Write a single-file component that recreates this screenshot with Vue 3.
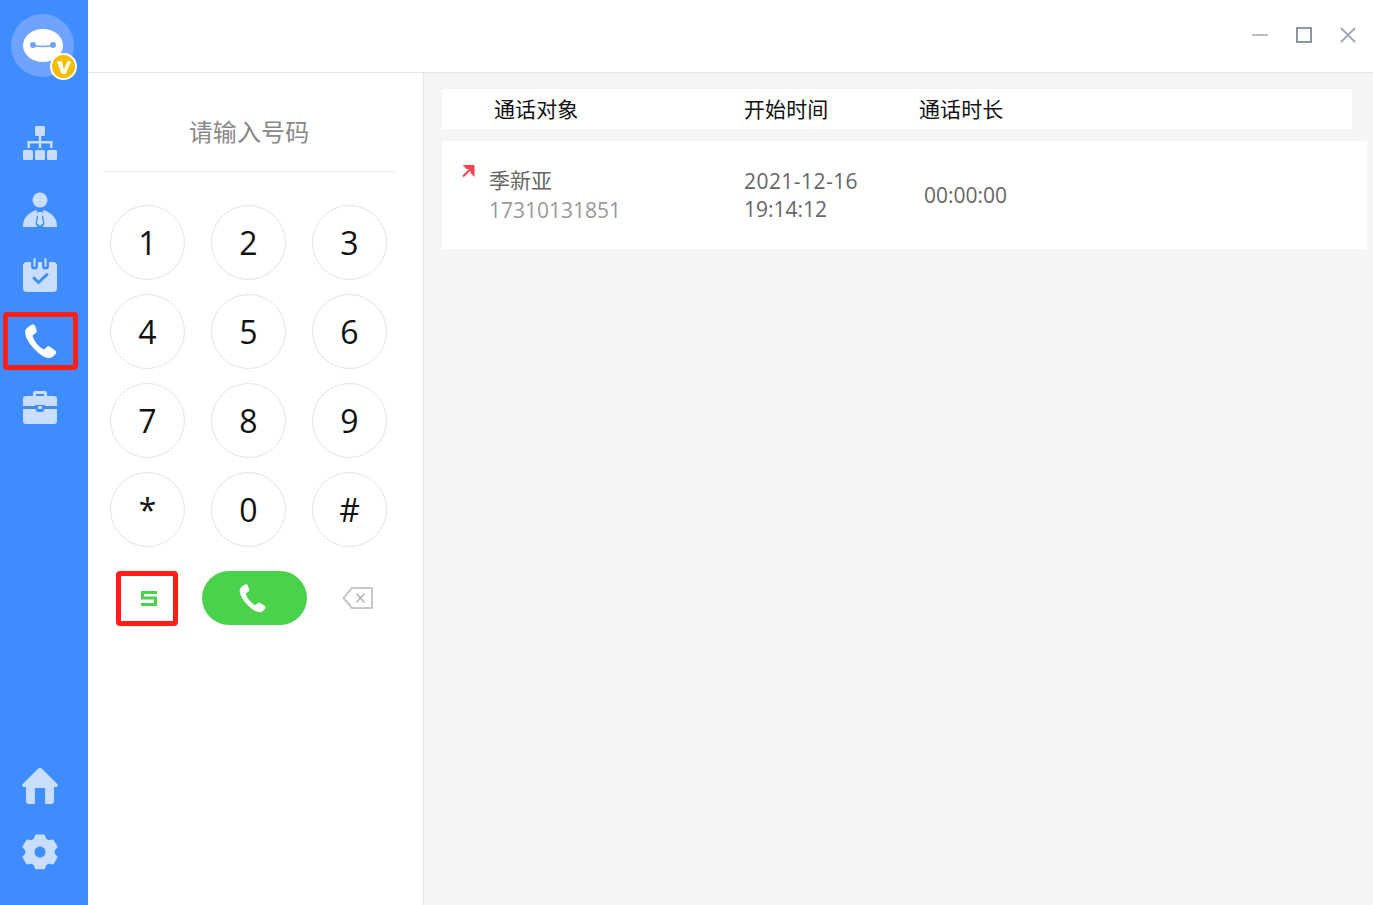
<script setup>
const keys = ['1', '2', '3', '4', '5', '6', '7', '8', '9', '*', '0', '#']
const phonePath = 'M6.6 1.2C5 1.9 2.6 3.4 2.2 5.2c-.5 2.6 1.2 6.6 4.6 10.6 3.6 4.2 7.6 7.2 11 7.6 2 .2 3.8-1.6 4.8-3 .5-.8.3-1.6-.4-2.1l-3.6-2.4c-.8-.5-1.5-.4-2.2.2l-1.3 1.2c-.4.3-.8.3-1.2.1-1.6-1-3-2.4-4.2-3.8-1.2-1.5-2-3-2.6-4.6-.1-.4 0-.8.4-1.1l1.5-1c.8-.6 1-1.3.7-2.2L8.7 2c-.4-.9-1.2-1.2-2.1-.8z'
</script>

<template>
  <div class="app">
    <aside class="side">
      <div class="logo">
        <svg width="40" height="33" viewBox="0 0 40 33">
          <ellipse cx="20" cy="16.500" rx="20" ry="16.500" fill="#fff" />
          <circle cx="10" cy="16" r="3" fill="#6ea4ff" />
          <circle cx="30" cy="16" r="3" fill="#6ea4ff" />
          <path d="M10 16.500q10 2 20 0" fill="none" stroke="#6ea4ff" stroke-width="1.400" />
        </svg>
        <span class="vip">
          <svg width="23" height="23" viewBox="0 0 24 24">
            <path d="M5 6.500h5.400l2 9 3.600-9h4L14 20h-3.600z" fill="#fff" />
          </svg>
        </span>
      </div>

      <nav class="nav">
        <div class="nav-item">
          <svg width="34" height="34" viewBox="0 0 34 34" fill="#c9deff">
            <rect x="12" y="0" width="10" height="10" rx="1.500" />
            <path d="M15.800 10h2.400v5H29.500v7h-2.400v-4.600H18.200V22h-2.400v-4.600H6.900V22H4.500v-7h11.300z" />
            <rect x="0" y="24" width="10" height="10" rx="1.500" />
            <rect x="12" y="24" width="10" height="10" rx="1.500" />
            <rect x="24" y="24" width="10" height="10" rx="1.500" />
          </svg>
        </div>
        <div class="nav-item">
          <svg width="34" height="35" viewBox="0 0 34 35" fill="#c9deff">
            <circle cx="17" cy="8" r="7.500" />
            <path d="M0 35c0-9 4-13 13-17l1.500 2 -2 12 2 3zM34 35c0-9-4-13-13-17l-1.500 2 2 12-2 3z" />
            <path d="M15 20h4l1 3-1.200 2 1.500 6L17 34l-3.300-3 1.500-6L14 23z" />
          </svg>
        </div>
        <div class="nav-item">
          <svg width="34" height="34" viewBox="0 0 34 34" fill="#c9deff">
            <path d="M4 4h4v4a3.500 3.500 0 0 0 7 0V4h4v4a3.500 3.500 0 0 0 7 0V4h4a4 4 0 0 1 4 4v22a4 4 0 0 1-4 4H4a4 4 0 0 1-4-4V8a4 4 0 0 1 4-4z" />
            <rect x="10.500" y="0" width="2" height="9" rx="1" />
            <rect x="21.500" y="0" width="2" height="9" rx="1" />
            <path d="M11 20l4.500 4.500L24 16.500" fill="none" stroke="#3f8cff" stroke-width="3" stroke-linecap="round" />
          </svg>
        </div>
        <div class="nav-item is-marked">
          <svg width="36" height="36" viewBox="0 0 24 24"><path :d="phonePath" fill="#fff" /></svg>
          <span class="mark mark-nav"></span>
        </div>
        <div class="nav-item">
          <svg width="34" height="34" viewBox="0 0 34 34" fill="#c9deff">
            <path d="M10 6V3a2 2 0 0 1 2-2h10a2 2 0 0 1 2 2v3h-3V4h-8v2z" />
            <path d="M3 6h28a3 3 0 0 1 3 3v7H22v-1h-10v1H0V9a3 3 0 0 1 3-3z" />
            <path d="M0 19h13v1a2 2 0 0 0 2 2h4a2 2 0 0 0 2-2v-1h13v12a3 3 0 0 1-3 3H3a3 3 0 0 1-3-3z" />
            <rect x="15" y="16" width="4" height="3" rx="1" />
          </svg>
        </div>
      </nav>

      <div class="side-bottom">
        <div class="nav-item">
          <svg width="36" height="36" viewBox="0 0 36 36" fill="#c9deff">
            <path d="M18 0c.8 0 1.500.3 2 .8l15.300 15.300c1 1.100.4 2.900-1.300 2.900h-2v14a3 3 0 0 1-3 3h-6V20h-10v16H7a3 3 0 0 1-3-3V19H2c-1.700 0-2.300-1.800-1.300-2.900L16 .8c.5-.5 1.200-.8 2-.8z" />
          </svg>
        </div>
        <div class="nav-item">
          <svg width="36" height="36" viewBox="0 0 36 36">
            <path d="M14 1.500h8l1.500 4 3 1.700 4.300-.8 3.700 6.400-2.800 3.200v3.800l2.800 3.200-3.700 6.400-4.300-.8-3 1.700-1.500 4h-8l-1.500-4-3-1.700-4.300.8-3.700-6.400 2.800-3.200v-3.800L1.500 12.800l3.700-6.400 4.300.8 3-1.700z" fill="#c9deff" stroke="#c9deff" stroke-width="2" stroke-linejoin="round" />
            <circle cx="18" cy="18" r="5.500" fill="#3f8cff" />
          </svg>
        </div>
      </div>
    </aside>

    <div class="main">
      <header class="titlebar">
        <svg width="16" height="16" viewBox="0 0 16 16"><path d="M0 8h16" stroke="#a2a9b4" stroke-width="1.500" /></svg>
        <svg width="16" height="16" viewBox="0 0 16 16"><rect x="1" y="1" width="14" height="14" fill="none" stroke="#8c95a3" stroke-width="2" /></svg>
        <svg width="16" height="16" viewBox="0 0 16 16"><path d="M1 1l14 14M15 1L1 15" stroke="#a2a9b4" stroke-width="1.800" /></svg>
      </header>

      <div class="body">
        <section class="dial">
          <div class="number-input">请输入号码</div>
          <div class="keys">
            <button v-for="k in keys" :key="k" class="key">{{ k }}</button>
          </div>
          <div class="actions">
            <div class="sim">
              <svg width="16" height="15" viewBox="0 0 16 15" fill="none" stroke="#4bd24d" stroke-width="3">
                <path d="M16 1.500H1.500V7h13v6.500H0" />
              </svg>
              <span class="mark mark-sim"></span>
            </div>
            <button class="call">
              <svg width="30" height="30" viewBox="0 0 24 24"><path :d="phonePath" fill="#fff" /></svg>
            </button>
            <div class="back">
              <svg width="32" height="24" viewBox="0 0 32 24" fill="none" stroke="#c8c8c8" stroke-width="2">
                <path d="M10 2h20v20H10L1.500 12z" stroke-linejoin="round" />
                <path d="M14.500 7.500l8 9M22.500 7.500l-8 9" stroke="#b5b5b5" stroke-width="1.600" />
              </svg>
            </div>
          </div>
        </section>

        <section class="records">
          <div class="thead">
            <span class="th-name">通话对象</span>
            <span class="th-time">开始时间</span>
            <span class="th-len">通话时长</span>
          </div>
          <div class="row">
            <svg class="out" width="14" height="14" viewBox="0 0 14 14">
              <path d="M2 12.500L10 4.500M4 2h8.500v8.500L10.500 8.500V4H6z" fill="#f8404f" stroke="#f8404f" stroke-width="2" />
            </svg>
            <div class="who">
              <div class="name">季新亚</div>
              <div class="tel">17310131851</div>
            </div>
            <div class="time"><span class="date">2021-12-16</span><br />19:14:12</div>
            <div class="len">00:00:00</div>
          </div>
        </section>
      </div>
    </div>
  </div>
</template>

<style>
html, body { margin: 0; padding: 0; overflow: hidden; }
</style>

<style scoped>
.app {
  display: flex;
  width: 1373px;
  height: 905px;
  overflow: hidden;
  font-family: "Open Sans", "Noto Sans CJK SC", sans-serif;
  background: #fff;
}
.side {
  width: 88px;
  flex: none;
  display: flex;
  flex-direction: column;
  align-items: center;
  background: #3f8cff;
}
.logo {
  position: relative;
  width: 63px;
  height: 63px;
  margin: 14px 0 0 -3px;
  border-radius: 50%;
  background: #6ea4ff;
  display: flex;
  align-items: center;
  justify-content: center;
}
.vip {
  position: absolute;
  right: -3px;
  bottom: -3px;
  width: 23px;
  height: 23px;
  border: 2px solid #fff;
  border-radius: 50%;
  background: #f5bd00;
  display: flex;
}
.nav { margin-top: 33px; width: 100%; }
.nav-item {
  position: relative;
  height: 66px;
  width: 100%;
  padding-right: 8px;
  box-sizing: border-box;
  display: flex;
  align-items: center;
  justify-content: center;
}
.side-bottom { margin-top: auto; margin-bottom: 20px; width: 100%; }
.mark {
  position: absolute;
  box-sizing: border-box;
  border: 5px solid #ff1f14;
  border-radius: 4px;
}
.mark-nav { left: 3px; top: 4px; width: 75px; height: 58px; }
.mark-sim { left: 0; top: 0; width: 62px; height: 55px; }
.main { flex: 1; min-width: 0; display: flex; flex-direction: column; }
.titlebar {
  height: 69px;
  flex: none;
  border-bottom: 1px solid #e6e6e6;
  display: flex;
  align-items: center;
  justify-content: flex-end;
  gap: 28px;
  padding: 0 17px 3px 0;
  box-sizing: content-box;
}
.body { flex: 1; display: flex; min-height: 0; }
.dial {
  width: 336px;
  flex: none;
  box-sizing: border-box;
  border-right: 1px solid #e6e6e6;
  background: #fff;
  padding: 0 0 0 15px;
}
.number-input {
  width: 292px;
  box-sizing: border-box;
  border-bottom: 1px solid #ececec;
  text-align: center;
  font-size: 24px;
  letter-spacing: .1px;
  color: #888;
  height: 99px;
  line-height: 118px;
}
.keys {
  display: grid;
  grid-template-columns: repeat(3, 75px);
  grid-auto-rows: 75px;
  column-gap: 26px;
  row-gap: 14px;
  margin: 33px 0 0 7px;
}
.key {
  border: 1px solid #e4e4e4;
  border-radius: 50%;
  background: #fff;
  padding: 0;
  font: inherit;
  font-size: 32px;
  color: #111;
}
.actions {
  display: flex;
  align-items: center;
  margin: 24px 0 0 13px;
  height: 55px;
}
.sim {
  position: relative;
  width: 62px;
  height: 55px;
  padding-left: 4px;
  box-sizing: border-box;
  display: flex;
  align-items: center;
  justify-content: center;
}
.call {
  width: 105px;
  height: 54px;
  margin: -1px 0 0 24px;
  border: 0;
  border-radius: 27px;
  background: #4bd24d;
  padding: 0 5px 0 0;
  display: flex;
  align-items: center;
  justify-content: center;
}
.back { margin: -1px 0 0 35px; display: flex; }
.records {
  flex: 1;
  min-width: 0;
  background: #f5f5f5;
  padding: 16px 6px 0 18px;
}
.thead {
  display: flex;
  align-items: center;
  height: 40px;
  margin-right: 15px;
  background: #fff;
  font-size: 21px;
  letter-spacing: .1px;
  color: #111;
}
.thead span { position: relative; top: -1px; }
.th-name { margin-left: 52px; width: 250px; }
.th-time { width: 175px; }
.row {
  position: relative;
  display: flex;
  align-items: center;
  height: 108px;
  margin-top: 12px;
  background: #fff;
  font-size: 21px;
  line-height: 28px;
  color: #666;
}
.out { position: absolute; left: 19px; top: 23px; }
.who { margin-left: 47px; width: 255px; }
.tel { color: #999; margin-top: 2px; }
.time { width: 180px; }
.date { letter-spacing: .45px; }
</style>
